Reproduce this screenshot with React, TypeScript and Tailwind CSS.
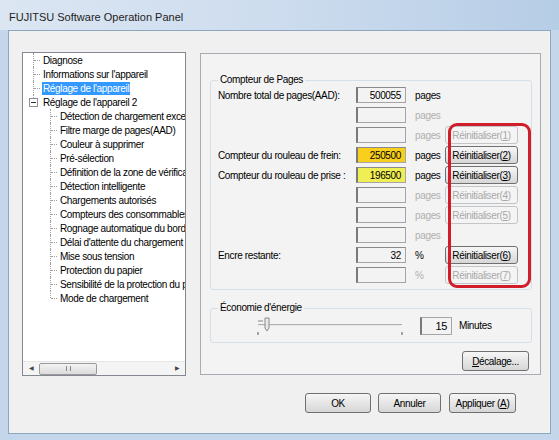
import React from "react";

const treeTop = ["Diagnose", "Informations sur l'appareil", "Réglage de l'appareil"];
const treeKids = [
  "Détection de chargement excessif",
  "Filtre marge de pages(AAD)",
  "Couleur à supprimer",
  "Pré-sélection",
  "Définition de la zone de vérification",
  "Détection intelligente",
  "Chargements autorisés",
  "Compteurs des consommables",
  "Rognage automatique du bord",
  "Délai d'attente du chargement",
  "Mise sous tension",
  "Protection du papier",
  "Sensibilité de la protection du papier",
  "Mode de chargement",
];

type Row = { label?: string; value?: string; unit: string; on?: boolean; bg?: string; btn?: string; btnOn?: boolean };

const rows: Row[] = [
  { label: "Nombre total de pages(AAD):", value: "500055", unit: "pages", on: true },
  { unit: "pages" },
  { unit: "pages", btn: "1" },
  { label: "Compteur du rouleau de frein:", value: "250500", unit: "pages", on: true, bg: "bg-[#f7cf1c]", btn: "2", btnOn: true },
  { label: "Compteur du rouleau de prise :", value: "196500", unit: "pages", on: true, bg: "bg-[#efee55]", btn: "3", btnOn: true },
  { unit: "pages", btn: "4" },
  { unit: "pages", btn: "5" },
  { unit: "pages" },
  { label: "Encre restante:", value: "32", unit: "%", on: true, btn: "6", btnOn: true },
  { unit: "%", btn: "7" },
];

function Btn({ children, on = true, className = "" }: { children: React.ReactNode; on?: boolean; className?: string }) {
  return (
    <div
      className={
        "flex items-center justify-center rounded-[3px] border " +
        (on
          ? "border-[#707070] bg-linear-to-b from-[#f6f6f6] via-[#e6e6e6] to-[#d6d6d6] text-black "
          : "border-[#c2c5c8] bg-[#f4f4f4] text-[#a8a8a8] ") +
        className
      }
    >
      {children}
    </div>
  );
}

function TreeRow({ label, last, selected }: { label: string; last?: boolean; selected?: boolean }) {
  return (
    <div className="flex h-[14px] items-center">
      <div className="relative h-[14px] w-[19px] shrink-0">
        <div className={"absolute left-[10px] top-0 border-l border-dotted border-[#a0a0a0] " + (last ? "h-[7px]" : "h-[14px]")} />
        <div className="absolute left-[11px] top-[7px] w-[6px] border-t border-dotted border-[#a0a0a0]" />
      </div>
      <span className={"whitespace-nowrap px-[1px] leading-[13px] " + (selected ? "bg-[#3399ff] text-white" : "")}>{label}</span>
    </div>
  );
}

export default function App() {
  return (
    <div className="h-[440px] w-[559px] overflow-hidden bg-[#c3d6ea] font-['Liberation_Sans',Arial,sans-serif] text-black">
      <div className="flex h-[30px] items-center bg-linear-to-r from-[#dbe6f2] via-[#cddcee] to-[#b6cde6] pl-[9px] pt-[4px] text-[11px] text-[#1e1e1e]">
        FUJITSU Software Operation Panel
      </div>
      <div className="ml-[8px] h-[404px] w-[543px] border border-[#8fa6bf] bg-[#f0f0f0] text-[10px] tracking-[-0.35px]">
        <div className="flex">
          {/* tree */}
          <div className="ml-[13px] mt-[21px] flex h-[324px] w-[164px] flex-col overflow-hidden border border-[#828790] bg-white">
            <div className="flex-1 overflow-hidden">
              {treeTop.map((t) => (
                <TreeRow key={t} label={t} selected={t === "Réglage de l'appareil"} />
              ))}
              <div className="flex h-[14px] items-center">
                <div className="relative h-[14px] w-[19px] shrink-0">
                  <div className="absolute left-[10px] top-0 h-[3px] border-l border-dotted border-[#a0a0a0]" />
                  <div className="absolute left-[6px] top-[3px] flex h-[9px] w-[9px] items-center justify-center border border-[#919191] bg-white">
                    <div className="h-px w-[5px] bg-[#333]" />
                  </div>
                </div>
                <span className="whitespace-nowrap px-[1px] leading-[13px]">Réglage de l'appareil 2</span>
              </div>
              <div className="pl-[17px]">
                {treeKids.map((t, i) => (
                  <TreeRow key={t} label={t} last={i === treeKids.length - 1} />
                ))}
              </div>
            </div>
            <div className="flex h-[14px] items-center border-t border-[#e6e6e6] bg-[#f4f4f4]">
              <div className="flex w-[16px] justify-center text-[6px] text-[#444]">◀</div>
              <div className="flex h-[12px] w-[58px] items-center justify-center rounded-[2px] border border-[#9a9a9a] bg-linear-to-b from-[#f3f3f3] to-[#dcdcdc]">
                <div className="h-[5px] w-[5px] border-x border-[#888]" />
              </div>
              <div className="flex-1" />
              <div className="flex w-[16px] justify-center text-[6px] text-[#444]">▶</div>
            </div>
          </div>

          {/* right panel */}
          <div className="ml-[14px] mt-[22px] h-[322px] w-[341px] border border-[#a9acb2] bg-[#f3f3f3]">
            <div className="relative ml-[9px] mt-[26px] h-[210px] w-[322px] rounded-[3px] border border-[#d5dfe5]">
              <span className="absolute -top-[7px] left-[7px] bg-[#f3f3f3] px-[2px] leading-[12px]">Compteur de Pages</span>
              <div className="mt-[4px] grid grid-cols-[145px_59px_30px_73px]">
                {rows.map((r, i) => (
                  <React.Fragment key={i}>
                    <div className="flex h-[20px] items-center pl-[7px] whitespace-nowrap">{r.label}</div>
                    <div className="flex h-[20px] items-center">
                      <div
                        className={
                          "flex h-[16px] w-[50px] items-center justify-end border border-[#a5a5a5] border-l-2 border-l-[#7a7a7a] border-t-[#8a8a8a] pr-[4px] " +
                          (r.bg ?? "bg-[#f3f3f3]")
                        }
                      >
                        {r.value}
                      </div>
                    </div>
                    <div className={"flex h-[20px] items-center " + (r.on ? "text-black" : "text-[#b0b0b0]")}>{r.unit}</div>
                    <div className="flex h-[20px] items-center">
                      {r.btn && (
                        <Btn on={!!r.btnOn} className="h-[18px] w-[73px]">
                          Réinitialiser(<span className="underline">{r.btn}</span>)
                        </Btn>
                      )}
                    </div>
                  </React.Fragment>
                ))}
              </div>
              <div className="absolute left-[237px] top-[42px] h-[165px] w-[83px] rounded-[9px] border-[3px] border-[#d11d2a]" />
            </div>

            <div className="relative ml-[9px] mt-[18px] h-[35px] w-[322px] rounded-[3px] border border-[#d5dfe5]">
              <span className="absolute -top-[7px] left-[7px] bg-[#f3f3f3] px-[2px] leading-[12px]">Économie d'énergie</span>
              <div className="flex items-start">
                <svg width="160" height="30" className="ml-[41px] mt-[3px]">
                  <line x1="6" y1="12.5" x2="150" y2="12.5" stroke="#b0b0b0" />
                  <line x1="6" y1="13.5" x2="150" y2="13.5" stroke="#e8e8e8" />
                  <path d="M13 6 L17 6 L17 16 L15 19 L13 16 Z" fill="#e9e9e9" stroke="#8a8a8a" />
                  <line x1="6" y1="9" x2="11" y2="9" stroke="#888" />
                  <line x1="6" y1="20" x2="6" y2="23" stroke="#555" />
                  <line x1="150" y1="20" x2="150" y2="23" stroke="#555" />
                </svg>
                <div className="ml-[8px] mt-[8px] flex h-[18px] w-[32px] items-center justify-end border border-[#a5a5a5] border-l-2 border-l-[#7a7a7a] pr-[4px] text-[11px]">
                  15
                </div>
                <span className="ml-[7px] mt-[11px] leading-[12px]">Minutes</span>
              </div>
            </div>

            <div className="mr-[11px] mt-[8px] flex justify-end">
              <Btn className="h-[20px] w-[67px]">
                <span className="underline">D</span>écalage...
              </Btn>
            </div>
          </div>
        </div>

        <div className="mt-[17px] flex">
          <Btn className="ml-[296px] h-[20px] w-[66px] border-[#3c7fb1]">OK</Btn>
          <Btn className="ml-[7px] h-[20px] w-[63px]">Annuler</Btn>
          <Btn className="ml-[8px] h-[20px] w-[67px]">
            Appliquer (<span className="underline">A</span>)
          </Btn>
        </div>
      </div>
    </div>
  );
}
